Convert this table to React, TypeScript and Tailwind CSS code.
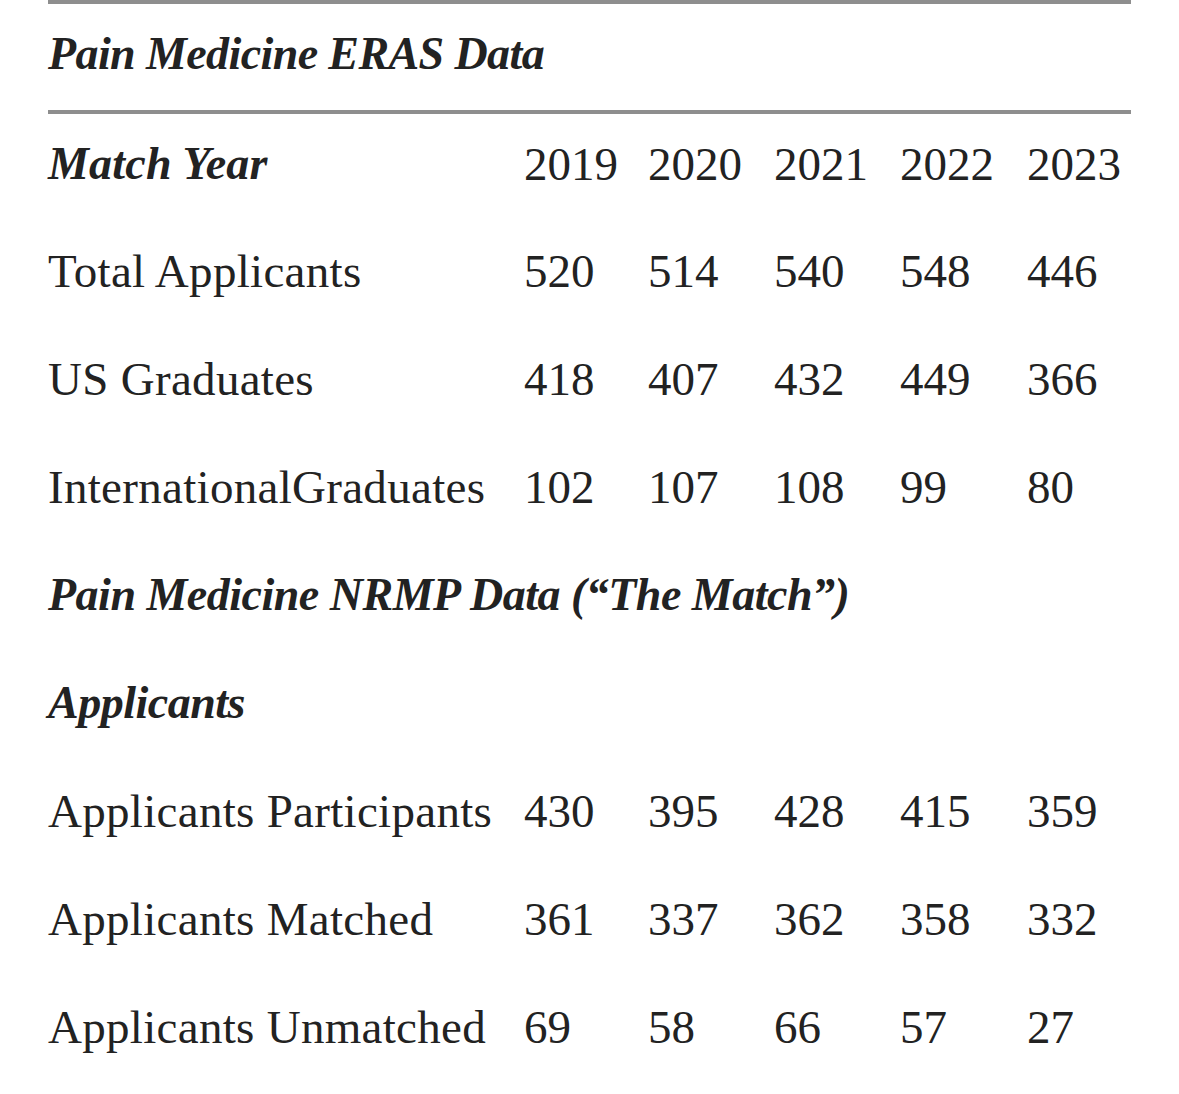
const years = ['2019', '2020', '2021', '2022', '2023'];

const eras = [
  { label: 'Total Applicants', values: ['520', '514', '540', '548', '446'] },
  { label: 'US Graduates', values: ['418', '407', '432', '449', '366'] },
  { label: 'InternationalGraduates', values: ['102', '107', '108', '99', '80'] },
];

const nrmp = [
  { label: 'Applicants Participants', values: ['430', '395', '428', '415', '359'] },
  { label: 'Applicants Matched', values: ['361', '337', '362', '358', '332'] },
  { label: 'Applicants Unmatched', values: ['69', '58', '66', '57', '27'] },
];

const rowGrid = 'grid grid-cols-[476px_124px_126px_126px_127px_1fr] items-center';

const DataRow = ({ label, values }: { label: string; values: string[] }) => {
  return (
    <div className={`${rowGrid} h-[108px]`}>
      <div className="whitespace-nowrap tracking-[0.3px]">{label}</div>
      {values.map((v, i) => (
        <div key={i}>{v}</div>
      ))}
    </div>
  );
};

const Heading = ({ children }: { children: string }) => {
  return (
    <div className="h-[108px] flex items-center">
      <div className="font-bold italic text-[46px] tracking-[-0.5px] whitespace-nowrap">
        {children}
      </div>
    </div>
  );
};

const App = () => {
  return (
    <div
      className="w-[1179px] h-[1094px] bg-white text-[#222222] text-[47px] leading-[52px] overflow-hidden"
      style={{ fontFamily: '"Liberation Serif", "Times New Roman", serif' }}
    >
      <div className="ml-[48px] w-[1083px]">
        <div className="h-[4px] bg-[#8e8e8e]" />
        <div className="h-[106px] flex items-center pb-[7px]">
          <div className="font-bold italic text-[46px] tracking-[-0.6px] whitespace-nowrap">
            Pain Medicine ERAS Data
          </div>
        </div>
        <div className="h-[4px] bg-[#8e8e8e]" />
        <div className={`${rowGrid} h-[103px] pb-[3px]`}>
          <div className="font-bold italic text-[46px] tracking-[0.2px] whitespace-nowrap">
            Match Year
          </div>
          {years.map((y) => (
            <div key={y}>{y}</div>
          ))}
        </div>
        {eras.map((r) => (
          <DataRow key={r.label} label={r.label} values={r.values} />
        ))}
        <Heading>Pain Medicine NRMP Data (“The Match”)</Heading>
        <Heading>Applicants</Heading>
        {nrmp.map((r) => (
          <DataRow key={r.label} label={r.label} values={r.values} />
        ))}
      </div>
    </div>
  );
};

export default App;
